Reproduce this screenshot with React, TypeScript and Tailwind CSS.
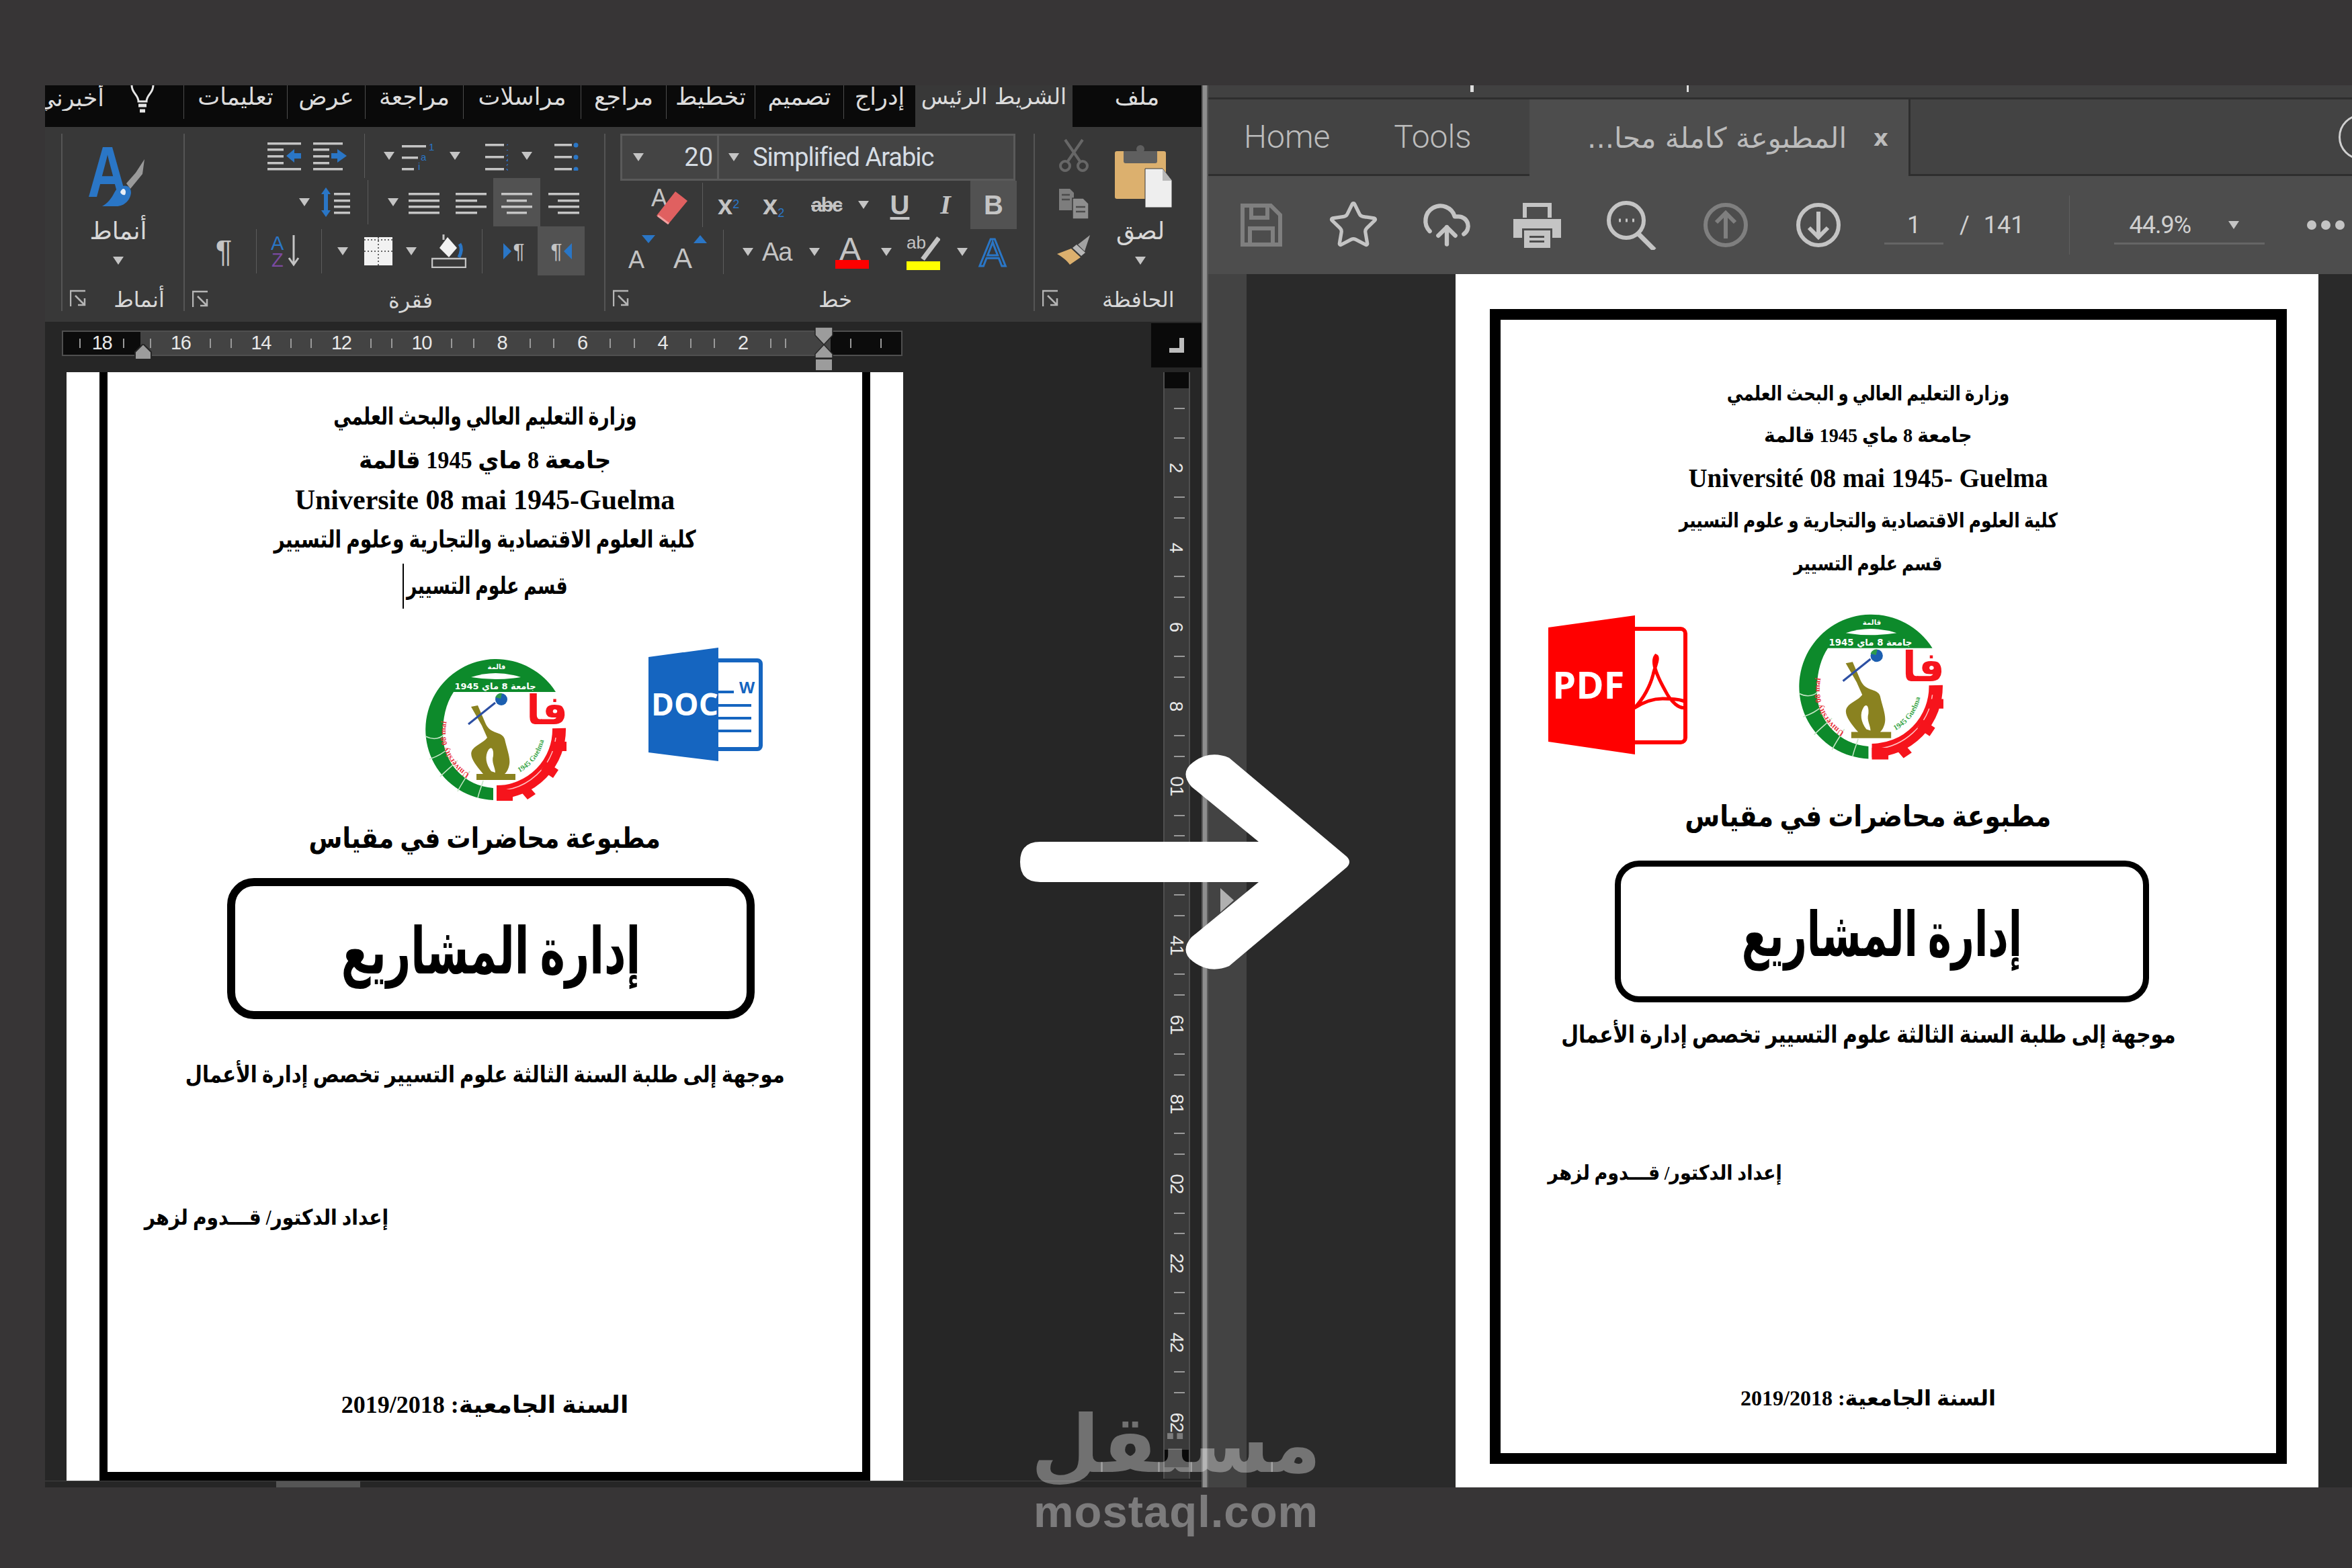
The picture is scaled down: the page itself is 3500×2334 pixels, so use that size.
import { CloudUpload, Star } from "lucide-react";

const ar = "font-['DejaVu_Sans',sans-serif]";
const doc = "font-['Liberation_Serif','DejaVu_Sans',serif]";
const g = "#c4c4c4";
const b = "#2a76c6";

const wordTabs = [
  { label: "تعليمات", cls: "w-[154px]" },
  { label: "عرض", cls: "w-[116px]" },
  { label: "مراجعة", cls: "w-[146px]" },
  { label: "مراسلات", cls: "w-[175px]" },
  { label: "مراجع", cls: "w-[127px]" },
  { label: "تخطيط", cls: "w-[132px]" },
  { label: "تصميم", cls: "w-[132px]" },
  { label: "إدراج", cls: "w-[107px]" },
];

const hRuler = ["16", "14", "12", "10", "8", "6", "4", "2"];
const vRuler = ["2", "4", "6", "8", "01", "21", "41", "61", "81", "02", "22", "42", "62"];

function Caret({ className = "" }: { className?: string }) {
  return (
    <svg width="16" height="12" viewBox="0 0 16 12" className={`shrink-0 ${className}`}>
      <path d="M0 0h16L8 12z" fill={g} />
    </svg>
  );
}

function Sep({ className = "" }: { className?: string }) {
  return <div className={`h-[66px] w-px shrink-0 bg-[#5c5c5c] ${className}`} />;
}

function Launcher() {
  return (
    <svg width="25" height="26" viewBox="0 0 25 26" fill="none" stroke="#b5b5b5" strokeWidth="2.5" className="shrink-0">
      <path d="M1 25V2h22" />
      <path d="M8 9l14 14M22 13v10H12" />
    </svg>
  );
}

function Lines({ rows, w = 50, h = 44, className = "", children }: { rows: number[][]; w?: number; h?: number; className?: string; children?: React.ReactNode }) {
  return (
    <svg width={w} height={h} viewBox={`0 0 ${w} ${h}`} className={`shrink-0 ${className}`}>
      {rows.map((r, i) => (
        <rect key={i} x={r[0]} y={r[1]} width={r[2]} height={3.5} fill={g} />
      ))}
      {children}
    </svg>
  );
}

function StylesIcon() {
  return (
    <svg width="92" height="94" viewBox="0 0 92 94" className="shrink-0">
      <text x="0" y="78" fill={b} fontSize="108" fontWeight="700" fontFamily="Liberation Sans" textLength="60" lengthAdjust="spacingAndGlyphs">
        A
      </text>
      <path d="M85 22L72 42l-14 16 6 8 18-22z" fill="#9a9a9a" />
      <path d="M52 62c8-2 13 2 13 10-1 10-9 20-22 20H22c8-4 14-12 18-20 3-6 7-9 12-10z" fill={b} />
      <path d="M54 66c3 1 4 5 2 9-3 1-6-1-7-4 1-3 3-5 5-5z" fill="#e8eef6" />
    </svg>
  );
}

function PasteIcon() {
  return (
    <svg width="88" height="94" viewBox="0 0 88 94" className="shrink-0">
      <path d="M4 10h70a3 3 0 013 3v68H4a3 3 0 01-3-3V13a3 3 0 013-3z" fill="#dcb06e" />
      <path d="M14 10h50v15a3 3 0 01-3 3H17a3 3 0 01-3-3z" fill="#5f5f5f" />
      <circle cx="39" cy="7" r="6" fill="#5f5f5f" />
      <path d="M46 36h26l14 18v40H46z" fill="#eeeeee" stroke="#383838" strokeWidth="1" />
      <path d="M72 36v18h14z" fill="#b8b8b8" />
    </svg>
  );
}

function ScissorsIcon() {
  return (
    <svg width="46" height="50" viewBox="0 0 46 50" fill="none" stroke="#676767" strokeWidth="4" className="shrink-0">
      <path d="M10 2l22 32M36 2L14 34" />
      <ellipse cx="10" cy="41" rx="7" ry="7" />
      <ellipse cx="36" cy="41" rx="7" ry="7" />
    </svg>
  );
}

function CopyIcon() {
  return (
    <svg width="46" height="46" viewBox="0 0 46 46" className="shrink-0">
      <path d="M1 1h16l6 6v26H1z" fill="#7d7d7d" />
      <path d="M21 15h16l8 8v23H21z" fill="#8e8e8e" stroke="#383838" strokeWidth="1.5" />
      <path d="M5 10h12M5 17h12M26 28h14M26 35h14" stroke="#4c4c4c" strokeWidth="2.5" />
    </svg>
  );
}

function PainterIcon() {
  return (
    <svg width="52" height="46" viewBox="0 0 52 46" className="shrink-0">
      <path d="M50 2l-18 14 10 10z" fill="#a2a2a2" />
      <path d="M30 16l13 12-6 5-13-12z" fill="#b8b8b8" />
      <path d="M22 22l14 13-16 11C16 40 8 34 1 30z" fill="#dcb06e" />
    </svg>
  );
}

function LogoMark({ className = "" }: { className?: string }) {
  return (
    <svg viewBox="11 10 215 212" className={className}>
      <defs>
        <path id="uni-left" d="M80 182A72 72 0 0 1 68 66" />
        <path id="uni-right" d="M154 180A72 72 0 0 0 192 116" />
      </defs>
      <path d="M115 221A105 105 0 1 1 208 60H56C44 78 40 100 40 122A80 80 0 0 0 115 203z" fill="#0d8a2b" />
      <path d="M82 38Q118 26 156 38Q118 44 82 38z" fill="#fff" />
      <path d="M14 126C26 132 38 130 44 120M20 160C32 156 40 152 48 144M36 186C46 176 54 170 62 162M62 208C68 196 74 188 80 178M92 218C94 208 98 200 100 192" fill="none" stroke="#c6e6c6" strokeWidth="1.5" />
      <text x="118" y="56" fontSize="13" fontWeight="700" fill="#fff" textAnchor="middle" className={ar}>
        جامعة 8 ماي 1945
      </text>
      <text x="120" y="26" fontSize="10" fontWeight="700" fill="#fff" textAnchor="middle" className={ar}>
        قالمة
      </text>
      <text fontSize="12" fontWeight="700" fill="#e8343b" fontFamily="Liberation Serif">
        <textPath href="#uni-left">University 08 mai</textPath>
      </text>
      <text fontSize="11" fontWeight="700" fill="#3aa64a" fontFamily="Liberation Serif">
        <textPath href="#uni-right">1945 Guelma</textPath>
      </text>
      <path d="M120 209A93 93 0 0 0 213 114" fill="none" stroke="#f6141c" strokeWidth="20" />
      <path d="M122 207A90 90 0 0 0 208 128" fill="none" stroke="#ffc4c4" strokeWidth="1.5" />
      <path d="M120 205h24v17h-24zM164 196l14 16-12 8-12-14zM194 164l18 12-8 12-18-12zM202 134h22v14h-22z" fill="#f6141c" />
      <text x="226" y="108" fontSize="60" fontWeight="700" fill="#f6141c" textAnchor="end" className={ar}>
        فا
      </text>
      <path d="M82 82L92 80L104 108C112 124 128 118 132 130C136 148 142 160 138 172C136 178 134 180 132 182H148V191H90V182H100C88 168 78 155 84 146C90 138 100 136 106 128L98 110z" fill="#8a8220" />
      <path d="M108 146C112 140 116 145 115 155C112 165 118 172 118 180L112 178C104 168 102 155 108 146z" fill="#fff" />
      <path d="M78 108L118 76" stroke="#2c4fa3" strokeWidth="3" />
      <circle cx="127" cy="71" r="9" fill="#1c5fb0" />
      <path d="M118 68a9 9 0 0 1 10-6l-2 8z" fill="#2d9a4c" />
    </svg>
  );
}

function DocIcon() {
  return (
    <svg width="170" height="169" viewBox="0 0 170 169" className="shrink-0">
      <path d="M104 19h58a5 5 0 015 5v122a5 5 0 01-5 5h-58" fill="none" stroke="#1565c0" strokeWidth="6" />
      <path d="M0 14L104 0v169L0 156z" fill="#1565c0" />
      <path d="M104 66h23M104 86h49M104 105h49M104 124h49" stroke="#1565c0" strokeWidth="4" />
      <text x="135" y="68" fontSize="24" fontWeight="700" fill="#1565c0" fontFamily="Open Sans">
        W
      </text>
      <text x="4" y="101" fontSize="46" fontWeight="700" fill="#fff" fontFamily="Open Sans">
        DOC
      </text>
    </svg>
  );
}

function PdfIcon() {
  return (
    <svg width="207" height="207" viewBox="0 0 207 207" className="shrink-0">
      <path d="M129 20h68a7 7 0 017 7v155a7 7 0 01-7 7h-68" fill="none" stroke="#ff0000" strokeWidth="6" />
      <path d="M0 18L129 0v207L0 188z" fill="#ff0000" />
      <path d="M160 60c-8 10 4 34 14 52 8 16 22 30 32 24 6-8-10-12-36-12-14 0-30 6-42 14 14-14 24-34 28-50 2-10 10-26 4-28z" fill="none" stroke="#ff0000" strokeWidth="5" />
      <text x="6" y="124" fontSize="56" fontWeight="700" fill="#fff" fontFamily="Open Sans">
        PDF
      </text>
    </svg>
  );
}

function GroupFoot({ className, label }: { className: string; label: string }) {
  return (
    <div className="flex items-start pl-[11px] pt-[22px]">
      <Launcher />
      <span className={`${ar} ${className} mt-[-2px] w-[100px] text-center text-[32px] leading-[34px]`}>{label}</span>
    </div>
  );
}

function RibbonGroups() {
  return (
    <div className="flex h-[290px] bg-[#383838] text-[#d8d8d8]">
      <div className="w-[24px]" />

      {/* styles */}
      <div className="mt-[10px] flex h-[264px] w-[182px] flex-col border-l-2 border-[#555]">
        <div className="flex h-[217px] flex-col items-center pr-[14px] pt-[16px]">
          <StylesIcon />
          <span className={`${ar} mt-[13px] text-[36px] leading-[44px]`}>أنماط</span>
          <Caret className="mt-[16px]" />
        </div>
        <GroupFoot className="ml-[28px]" label="أنماط" />
      </div>

      {/* paragraph */}
      <div className="mt-[10px] flex h-[264px] w-[626px] flex-col border-l-2 border-[#555]">
        <div className="flex h-[72px] items-center pl-[123px]">
          <Lines rows={[[0, 2, 50], [0, 11, 24], [0, 21, 24], [0, 31, 24], [0, 40, 50]]}>
            <path d="M28 22l12-10v6h10v8H40v6z" fill={b} />
          </Lines>
          <Lines className="ml-[18px]" rows={[[0, 2, 44], [0, 11, 24], [0, 21, 24], [0, 31, 24], [0, 40, 44]]}>
            <path d="M50 22L36 12v6H27v8h9v6z" fill={b} />
          </Lines>
          <Sep className="ml-[26px]" />
          <Caret className="ml-[28px]" />
          <Lines className="ml-[11px]" rows={[[0, 6, 36], [0, 23, 24], [0, 40, 18]]}>
            <text x="40" y="14" fontSize="15" fill={b} fontFamily="Liberation Sans">1</text>
            <text x="28" y="29" fontSize="15" fill={b} fontFamily="Liberation Sans">a</text>
            <text x="24" y="43" fontSize="15" fill={b} fontFamily="Liberation Sans">i</text>
          </Lines>
          <Caret className="ml-[21px]" />
          <Lines className="ml-[21px]" rows={[[16, 4, 28], [16, 22, 28], [16, 40, 28]]}>
            <text x="47" y="14" fontSize="15" fill={b} fontFamily="Liberation Sans">1</text>
            <text x="47" y="30" fontSize="15" fill={b} fontFamily="Liberation Sans">2</text>
            <text x="47" y="44" fontSize="15" fill={b} fontFamily="Liberation Sans">3</text>
          </Lines>
          <Caret className="ml-[20px]" />
          <Lines className="ml-[19px]" rows={[[14, 4, 26], [14, 22, 26], [14, 40, 26]]}>
            <circle cx="46" cy="6" r="3.5" fill={b} />
            <circle cx="46" cy="24" r="3.5" fill={b} />
            <circle cx="46" cy="42" r="3.5" fill={b} />
          </Lines>
        </div>
        <div className="flex h-[72px] items-center pl-[170px]">
          <Caret />
          <Lines className="ml-[12px]" rows={[[24, 8, 24], [24, 18, 24], [24, 27, 24], [24, 36, 24]]}>
            <path d="M12 0l7 10h-4v24h4l-7 10-7-10h4V10H5z" fill={b} />
          </Lines>
          <Sep className="ml-[24px]" />
          <Caret className="ml-[29px]" />
          <div className="ml-[3px] flex h-[72px] w-[70px] items-center justify-center">
            <Lines w={46} rows={[[0, 8, 46], [0, 18, 46], [0, 27, 46], [0, 36, 46]]} />
          </div>
          <div className="flex h-[72px] w-[70px] items-center justify-center">
            <Lines w={46} rows={[[0, 8, 46], [0, 18, 32], [0, 27, 46], [0, 36, 32]]} />
          </div>
          <div className="ml-[-2px] flex h-[72px] w-[70px] items-center justify-center bg-[#525252]">
            <Lines w={46} rows={[[0, 8, 46], [8, 18, 30], [0, 27, 46], [8, 36, 30]]} />
          </div>
          <div className="flex h-[72px] w-[70px] items-center justify-center">
            <Lines w={46} rows={[[0, 8, 46], [14, 18, 32], [0, 27, 46], [14, 36, 32]]} />
          </div>
        </div>
        <div className="flex h-[73px] items-center pl-[38px]">
          <span className="w-[40px] text-center font-['Liberation_Sans',sans-serif] text-[46px] leading-none text-[#c4c4c4]">¶</span>
          <Sep className="ml-[28px]" />
          <svg width="50" height="52" viewBox="0 0 50 52" className="ml-[21px] shrink-0">
            <text x="0" y="24" fontSize="29" fill={b} fontFamily="Liberation Sans">A</text>
            <text x="1" y="49" fontSize="29" fill="#7a4aa0" fontFamily="Liberation Sans">Z</text>
            <path d="M34 2v42M27 36l7 10 7-10" stroke={g} strokeWidth="3" fill="none" />
          </svg>
          <Sep className="ml-[25px]" />
          <Caret className="ml-[23px]" />
          <svg width="50" height="42" viewBox="0 0 50 42" className="ml-[20px] shrink-0">
            <rect x="4" y="0" width="42" height="42" fill="#f2f2f2" />
            <path d="M4 4h42M4 21h42M25 0v42" stroke="#666" strokeWidth="2" strokeDasharray="2 3" fill="none" />
          </svg>
          <Caret className="ml-[16px]" />
          <svg width="52" height="50" viewBox="0 0 52 50" className="ml-[22px] shrink-0">
            <path d="M24 4l14 16-12 14-14-14z" fill="#f2f2f2" />
            <path d="M18 0v8" stroke={g} strokeWidth="3" />
            <path d="M42 14c4 6 3 12-1 20" stroke={b} strokeWidth="5" fill="none" />
            <rect x="1" y="36" width="50" height="13" fill="none" stroke={g} strokeWidth="2.5" />
          </svg>
          <Sep className="ml-[23px]" />
          <div className="ml-[12px] flex h-[73px] w-[70px] items-center justify-center gap-[2px]">
            <svg width="12" height="24" viewBox="0 0 12 24"><path d="M0 0l12 12L0 24z" fill={b} /></svg>
            <span className="font-['Liberation_Sans',sans-serif] text-[32px] leading-none text-[#c4c4c4]">¶</span>
          </div>
          <div className="flex h-[73px] w-[70px] items-center justify-center gap-[2px] bg-[#525252]">
            <span className="font-['Liberation_Sans',sans-serif] text-[32px] leading-none text-[#c4c4c4]">¶</span>
            <svg width="12" height="24" viewBox="0 0 12 24"><path d="M12 0L0 12l12 12z" fill={b} /></svg>
          </div>
        </div>
        <GroupFoot className="ml-[250px]" label="فقرة" />
      </div>

      {/* font */}
      <div className="mt-[10px] flex h-[264px] w-[639px] flex-col border-l-2 border-[#555]">
        <div className="ml-[22px] flex h-[73px] w-[588px] items-center border-[3px] border-[#5a5a5a] bg-[#444]">
          <div className="flex h-full w-[144px] items-center border-r-[3px] border-[#5a5a5a] pl-[16px] pr-[6px]">
            <Caret />
            <span className="ml-auto font-['Roboto',sans-serif] text-[38px] leading-none text-[#d6dde4]">20</span>
          </div>
          <Caret className="ml-[14px]" />
          <span className="ml-[20px] font-['Roboto',sans-serif] text-[38px] leading-none tracking-[-1px] text-[#d6dde4]">Simplified Arabic</span>
        </div>
        <div className="flex h-[72px] items-center pl-[68px]">
          <svg width="56" height="60" viewBox="0 0 56 60" className="shrink-0">
            <text x="0" y="32" fontSize="36" fill={g} fontFamily="Liberation Sans">A</text>
            <path d="M36 10l18 14-28 34-18-12z" fill="#e06060" />
            <path d="M10 46l16 12" stroke="#f3a0a0" strokeWidth="3" />
          </svg>
          <Sep className="ml-[20px]" />
          <span className="ml-[22px] w-[50px] font-['Liberation_Sans',sans-serif] text-[40px] font-bold leading-none text-[#c4c4c4]">
            x<sup className="text-[18px] font-normal text-[#2a76c6]">2</sup>
          </span>
          <span className="ml-[17px] w-[50px] font-['Liberation_Sans',sans-serif] text-[40px] font-bold leading-none text-[#c4c4c4]">
            x<sub className="text-[18px] font-normal text-[#2a76c6]">2</sub>
          </span>
          <span className="ml-[22px] w-[50px] font-['Liberation_Sans',sans-serif] text-[30px] font-bold leading-none tracking-[-2px] text-[#c4c4c4] line-through">abc</span>
          <Caret className="ml-[20px]" />
          <span className="ml-[21px] w-[50px] text-center font-['Liberation_Sans',sans-serif] text-[40px] font-bold leading-none text-[#c4c4c4] underline underline-offset-4">U</span>
          <span className="ml-[18px] w-[50px] text-center font-['Liberation_Serif',serif] text-[40px] font-bold italic leading-none text-[#c4c4c4]">I</span>
          <span className="ml-[12px] flex h-[72px] w-[69px] items-center justify-center bg-[#525252] font-['Liberation_Sans',sans-serif] text-[40px] font-bold text-[#c4c4c4]">B</span>
        </div>
        <div className="flex h-[72px] items-center pl-[32px]">
          <svg width="50" height="50" viewBox="0 0 50 50" className="shrink-0">
            <text x="2" y="49" fontSize="36" fill={g} fontFamily="Liberation Sans">A</text>
            <path d="M22 0h20l-10 12z" fill={b} />
          </svg>
          <svg width="50" height="50" viewBox="0 0 50 50" className="ml-[19px] shrink-0">
            <text x="0" y="49" fontSize="42" fill={g} fontFamily="Liberation Sans">A</text>
            <path d="M30 12h20L40 0z" fill={b} />
          </svg>
          <Sep className="ml-[24px]" />
          <Caret className="ml-[28px]" />
          <span className="ml-[13px] w-[50px] font-['Liberation_Sans',sans-serif] text-[38px] leading-none tracking-[-1px] text-[#c4c4c4]">Aa</span>
          <Caret className="ml-[20px]" />
          <svg width="50" height="50" viewBox="0 0 50 50" className="ml-[23px] shrink-0">
            <text x="6" y="37" fontSize="48" fill={g} fontFamily="Liberation Sans">A</text>
            <rect x="0" y="37" width="50" height="13" fill="#ff0000" />
          </svg>
          <Caret className="ml-[18px]" />
          <svg width="50" height="54" viewBox="0 0 50 54" className="ml-[22px] shrink-0">
            <text x="0" y="22" fontSize="26" fill={g} fontFamily="Liberation Sans">ab</text>
            <path d="M48 6L24 38" stroke={g} strokeWidth="7" />
            <rect x="0" y="41" width="50" height="13" fill="#ffff00" />
          </svg>
          <Caret className="ml-[25px]" />
          <svg width="50" height="50" viewBox="0 0 50 50" className="ml-[12px] shrink-0">
            <text x="25" y="46" textAnchor="middle" fontSize="58" fill="none" stroke={b} strokeWidth="3" fontFamily="Liberation Sans">A</text>
          </svg>
        </div>
        <GroupFoot className="ml-[256px]" label="خط" />
      </div>

      {/* clipboard */}
      <div className="mt-[10px] flex h-[264px] w-[250px] flex-col border-l-2 border-[#555]">
        <div className="flex h-[217px] pl-[32px]">
          <div className="flex w-[52px] flex-col items-center pt-[7px]">
            <ScissorsIcon />
            <div className="h-[24px]" />
            <CopyIcon />
            <div className="h-[22px]" />
            <PainterIcon />
          </div>
          <div className="ml-[32px] flex w-[92px] flex-col items-center pt-[16px]">
            <PasteIcon />
            <span className={`${ar} mr-[10px] mt-[13px] text-[36px] leading-[44px]`}>لصق</span>
            <Caret className="mr-[10px] mt-[16px]" />
          </div>
        </div>
        <GroupFoot className="ml-[64px]" label="الحافظة" />
      </div>
    </div>
  );
}

function Tick() {
  return <span className="h-[14px] w-[2px] bg-[#999]" />;
}

function WordPane() {
  return (
    <div className="flex w-[1721px] shrink-0 flex-col">
      {/* tabs */}
      <div className={`${ar} flex h-[62px] bg-[#0a0a0a] text-[35px] text-[#dcdcdc]`}>
        <div className="flex w-[206px] items-start overflow-hidden">
          <div className="flex w-[88px] shrink-0 justify-end overflow-hidden">
            <span className="shrink-0 whitespace-nowrap leading-[38px]">أخبرني</span>
          </div>
          <svg width="36" height="44" viewBox="0 0 36 44" fill="none" stroke="#e6e6e6" strokeWidth="3" className="ml-[39px] mt-[-2px] shrink-0">
            <path d="M2 2c0 12 10 14 10 24h12c0-10 10-12 10-24" />
            <path d="M12 32h12M14 40h8" strokeWidth="5" />
          </svg>
        </div>
        {wordTabs.map((t) => (
          <div key={t.label} className={`${t.cls} flex h-[50px] items-start justify-center border-l border-[#4d4d4d] leading-[34px]`}>
            {t.label}
          </div>
        ))}
        <div className="flex h-[62px] w-[234px] items-start justify-center whitespace-nowrap bg-[#383838] text-[33px] leading-[34px]">الشريط الرئيس</div>
        <div className="flex w-[192px] items-start justify-center leading-[34px]">ملف</div>
      </div>

      <RibbonGroups />

      {/* document area */}
      <div className="relative flex h-[1735px] bg-[#262626]">
        <div className="flex w-[1646px] flex-col">
          {/* ruler */}
          <div className="ml-[25px] mt-[13px] flex h-[38px] w-[1251px] items-center border-2 border-[#4f4f4f] bg-[#434343] font-['Liberation_Sans',sans-serif] text-[29px] tracking-[-1.5px] text-[#e8e8e8]">
            <div className="flex h-full w-[115px] items-center justify-around bg-[#0c0c0c] px-[16px]">
              <Tick />
              <span>18</span>
              <Tick />
            </div>
            <div className="flex">
              {hRuler.map((n) => (
                <div key={n} className="flex h-[34px] w-[119.5px] items-center justify-around">
                  <Tick />
                  <span>{n}</span>
                  <Tick />
                </div>
              ))}
            </div>
            <div className="ml-[3px] flex h-[12px] w-[30px] items-center">
              <Tick />
            </div>
            <div className="ml-[38px] flex h-full flex-1 items-center justify-around bg-[#0c0c0c] px-[8px]">
              <Tick />
              <Tick />
            </div>
          </div>

          {/* page */}
          <div className="ml-[32px] mt-[24px] flex h-[1650px] w-[1245px] bg-white px-[49px]">
            <div className="flex w-full flex-col border-x-[12px] border-b-[13px] border-black text-black">
              <Line cls="mt-[36px] text-[36px]" fit="scale-x-[0.74]">وزارة التعليم العالي والبحث العلمي</Line>
              <Line cls="mt-[5px] text-[36px]" fit="scale-x-[0.95]">جامعة 8 ماي 1945 قالمة</Line>
              <p className="mt-[-1px] h-[60px] text-center font-['Liberation_Serif',serif] text-[42px] font-bold leading-[60px]">Universite 08 mai 1945-Guelma</p>
              <Line cls="mt-[-1px] text-[36px]" fit="scale-x-[0.78]">كلية العلوم الاقتصادية والتجارية وعلوم التسيير</Line>
              <div className="ml-[439px] mt-[9px] flex h-[60px] items-center">
                <span className="h-[67px] w-[2px] shrink-0 bg-black" />
                <div className="ml-[6px] flex w-[236px] justify-center">
                  <span dir="rtl" className={`${doc} shrink-0 scale-x-[0.74] whitespace-nowrap text-[36px] font-bold leading-[60px]`}>قسم علوم التسيير</span>
                </div>
              </div>
              <div className="mt-[62px] flex h-[229px] items-start">
                <LogoMark className="ml-[470px] mt-[16px] h-[212px] w-[215px] shrink-0" />
                <div className="ml-[120px]">
                  <DocIcon />
                </div>
              </div>
              <Line cls="mt-[25px] text-[42px]" fit="scale-x-[0.86]">مطبوعة محاضرات في مقياس</Line>
              <div className="ml-[178px] mt-[29px] flex h-[210px] w-[785px] items-center justify-center rounded-[40px] border-[12px] border-black pt-[10px]">
                <span dir="rtl" className={`${doc} shrink-0 scale-x-[0.66] whitespace-nowrap text-[96px] font-bold leading-none`}>إدارة المشاريع</span>
              </div>
              <Line cls="mt-[53px] text-[34px]" fit="scale-x-[0.853]">موجهة إلى طلبة السنة الثالثة علوم التسيير تخصص إدارة الأعمال</Line>
              <div className="ml-[55px] mt-[152px] flex h-[60px] w-[362px] justify-center">
                <span dir="rtl" className={`${doc} shrink-0 scale-x-[0.88] whitespace-nowrap text-[32px] font-bold leading-[60px]`}>إعداد الدكتور/ قـــدوم لزهر</span>
              </div>
              <Line cls="mt-[219px] text-[36px]" fit="scale-x-[1]">السنة الجامعية: 2019/2018</Line>
            </div>
          </div>
        </div>

        {/* vertical ruler */}
        <div className="flex w-[75px] flex-col items-center">
          <div className="mt-[2px] flex h-[66px] w-[75px] items-center justify-center bg-[#0a0a0a]">
            <div className="h-[22px] w-[22px] border-b-[7px] border-r-[7px] border-[#bdbdbd]" />
          </div>
          <div className="mt-[7px] flex h-[1647px] w-[40px] flex-col border-x-2 border-[#4f4f4f] bg-[#3a3a3a] font-['Liberation_Sans',sans-serif] text-[28px] tracking-[-1px] text-[#e8e8e8]">
            <div className="h-[24px] shrink-0 bg-[#0a0a0a]" />
            <div className="flex h-[59px] shrink-0 items-center justify-center">
              <span className="ml-[8px] h-[2px] w-[16px] bg-[#999]" />
            </div>
            <div className="flex h-[1521px] shrink-0 flex-col overflow-hidden">
              {vRuler.map((n) => (
                <div key={n} className="flex h-[118.4px] shrink-0 flex-col items-center justify-around">
                  <span className="ml-[8px] h-[2px] w-[16px] bg-[#999]" />
                  <span className="rotate-90 leading-none">{n}</span>
                  <span className="ml-[8px] h-[2px] w-[16px] bg-[#999]" />
                </div>
              ))}
            </div>
            <div className="h-[26px] shrink-0 bg-[#0a0a0a]" />
          </div>
        </div>

        {/* indent markers sit on the ruler */}
        <svg width="28" height="24" viewBox="0 0 28 24" className="absolute left-[132px] top-[33px]">
          <path d="M14 0l12 12v11H2V12z" fill="#9c9c9c" stroke="#262626" strokeWidth="2" />
        </svg>
        <svg width="30" height="66" viewBox="0 0 30 66" className="absolute left-[1144px] top-[8px]">
          <path d="M2 0h26v12L15 26 2 12zM15 26l13 14v6H2v-6z" fill="#9c9c9c" stroke="#262626" strokeWidth="1.5" />
          <rect x="3" y="48" width="24" height="16" fill="#9c9c9c" />
        </svg>

        {/* horizontal scrollbar */}
        <div className="absolute bottom-0 left-0 flex h-[10px] w-[1721px] border-t border-[#444] bg-[#262626]">
          <div className="ml-[344px] h-[9px] w-[125px] bg-[#555]" />
        </div>
      </div>
    </div>
  );
}

function Line({ cls, fit, children }: { cls: string; fit: string; children: React.ReactNode }) {
  return (
    <div className={`${cls} flex h-[60px] justify-center`}>
      <span dir="rtl" className={`${doc} ${fit} shrink-0 whitespace-nowrap font-bold leading-[60px]`}>
        {children}
      </span>
    </div>
  );
}

function PdfToolbar() {
  const c = "#c4c4c4";
  return (
    <div className="flex h-[146px] items-center bg-[#4d4d4d] pl-[48px] font-['Roboto',sans-serif] text-[36px] text-[#d0d0d0]">
      <svg width="62" height="64" viewBox="0 0 62 64" fill="none" stroke="#7f7f7f" strokeWidth="6" className="shrink-0">
        <path d="M3 3h42l14 14v44H3z" />
        <path d="M16 3v18h24V3M14 61V37h34v24" />
      </svg>
      <Star size={78} color={c} strokeWidth={1.6} className="ml-[67px] shrink-0" />
      <CloudUpload size={76} color={c} strokeWidth={2} className="ml-[62px] shrink-0" />
      <svg width="71" height="67" viewBox="0 0 71 67" className="ml-[61px] shrink-0" fill={c}>
        <path d="M14 0h43v22h-6V6H20v16h-6z" />
        <path d="M0 24h71v28H58V38H13v14H0z" />
        <path d="M16 41h39v26H16zM24 49v3h22v-3zM24 56v3h22v-3z" fillRule="evenodd" />
      </svg>
      <svg width="76" height="74" viewBox="0 0 76 74" fill="none" stroke={c} strokeWidth="6" className="ml-[67px] shrink-0">
        <circle cx="30" cy="30" r="26" />
        <path d="M48 50l24 24" strokeWidth="7" />
        <path d="M19 30h3M29 30h3M39 30h3" strokeWidth="5" />
      </svg>
      <svg width="68" height="68" viewBox="0 0 68 68" fill="none" stroke="#7f7f7f" strokeWidth="6" className="ml-[68px] shrink-0">
        <circle cx="34" cy="34" r="30" />
        <path d="M34 54V16M20 30l14-14 14 14" />
      </svg>
      <svg width="68" height="68" viewBox="0 0 68 68" fill="none" stroke={c} strokeWidth="6" className="ml-[70px] shrink-0">
        <circle cx="34" cy="34" r="30" />
        <path d="M34 14v38M20 38l14 14 14-14" />
      </svg>
      <div className="relative ml-[64px] w-[88px] text-center leading-none">
        1
        <div className="absolute left-0 top-[44px] h-[3px] w-[88px] bg-[#666]" />
      </div>
      <span className="ml-[24px] leading-none">/</span>
      <span className="ml-[21px] leading-none">141</span>
      <div className="ml-[66px] h-[88px] w-px bg-[#5f5f5f]" />
      <div className="relative ml-[66px] flex w-[224px] items-center pl-[23px] leading-none">
        <span className="tracking-[-1px]">44.9%</span>
        <Caret className="ml-[56px]" />
        <div className="absolute left-0 top-[44px] h-[3px] w-[224px] bg-[#666]" />
      </div>
      <div className="ml-[63px] flex gap-[7px]">
        <span className="h-[14px] w-[14px] rounded-full bg-[#c4c4c4]" />
        <span className="h-[14px] w-[14px] rounded-full bg-[#c4c4c4]" />
        <span className="h-[14px] w-[14px] rounded-full bg-[#c4c4c4]" />
      </div>
    </div>
  );
}

function PdfPane() {
  return (
    <div className="flex min-w-0 flex-1 flex-col">
      <div className="flex h-[18px] bg-[#414141]">
        <span className="ml-[390px] h-[10px] w-[5px] bg-[#ddd]" />
        <span className="ml-[317px] h-[10px] w-[3px] bg-[#ddd]" />
      </div>
      <div className="h-[3px] bg-[#2e2e2e]" />
      <div className="flex h-[114px] text-[#bcbcbc]">
        <div className="flex w-[478px] items-center gap-[95px] border-b-[3px] border-[#2e2e2e] bg-[#434343] pl-[53px] font-['Roboto',sans-serif] text-[48px] font-light">
          <span>Home</span>
          <span>Tools</span>
        </div>
        <div dir="rtl" className={`${ar} flex w-[564px] items-center bg-[#4d4d4d] pr-[30px] text-[42px]`}>
          <span className="text-[34px] font-bold">x</span>
          <span className="mr-[40px] whitespace-nowrap">المطبوعة كاملة محا...</span>
        </div>
        <div className="flex flex-1 items-center justify-end overflow-hidden border-b-[3px] border-l-[3px] border-[#2e2e2e] bg-[#434343]">
          <div className="mr-[-48px] h-[68px] w-[68px] rounded-full border-[3px] border-[#cfcfcf]" />
        </div>
      </div>
      <PdfToolbar />
      <div className="flex flex-1">
        <div className="w-[57px] bg-[#434343]" />
        <div className="w-[311px] bg-[#2a2a2a]" />
        <div className="h-[1806px] w-[1284px] bg-white px-[51px] pt-[52px]">
          <div className="flex h-[1719px] w-[1186px] flex-col border-[16px] border-black pr-[60px] text-black">
            <Line cls="mt-[80px] text-[30px]" fit="scale-x-[0.815]">وزارة التعليم العالي و البحث العلمي</Line>
            <Line cls="mt-[2px] text-[30px]" fit="scale-x-[0.94]">جامعة 8 ماي 1945 قالمة</Line>
            <p className="mt-[4px] h-[60px] text-center font-['Liberation_Serif',serif] text-[39px] font-bold leading-[60px]">Université 08 mai 1945- Guelma</p>
            <Line cls="mt-[3px] text-[30px]" fit="scale-x-[0.83]">كلية العلوم الاقتصادية والتجارية و علوم التسيير</Line>
            <Line cls="mt-[4px] text-[30px]" fit="scale-x-[0.82]">قسم علوم التسيير</Line>
            <div className="mt-[43px] flex h-[220px] items-start">
              <div className="ml-[71px] mt-[4px]">
                <PdfIcon />
              </div>
              <LogoMark className="ml-[163px] h-[220px] w-[220px] shrink-0" />
            </div>
            <Line cls="mt-[54px] text-[44px]" fit="scale-x-[0.855]">مطبوعة محاضرات في مقياس</Line>
            <div className="ml-[170px] mt-[35px] flex h-[211px] w-[795px] items-center justify-center rounded-[36px] border-[9px] border-black pt-[10px]">
              <span dir="rtl" className={`${doc} shrink-0 scale-x-[0.645] whitespace-nowrap text-[92px] font-bold leading-none`}>إدارة المشاريع</span>
            </div>
            <Line cls="mt-[18px] text-[36px]" fit="scale-x-[0.826]">موجهة إلى طلبة السنة الثالثة علوم التسيير تخصص إدارة الأعمال</Line>
            <div className="ml-[70px] mt-[146px] flex h-[60px] w-[349px] justify-center">
              <span dir="rtl" className={`${doc} shrink-0 scale-x-[0.9] whitespace-nowrap text-[30px] font-bold leading-[60px]`}>إعداد الدكتور/ قـــدوم لزهر</span>
            </div>
            <Line cls="mt-[275px] text-[32px]" fit="scale-x-[1]">السنة الجامعية: 2019/2018</Line>
          </div>
        </div>
        <div className="flex-1 bg-[#2a2a2a]" />
      </div>
    </div>
  );
}

export default function App() {
  return (
    <div className="relative h-[2334px] w-[3500px] overflow-hidden bg-[#373536]">
      <div className="flex h-[2214px] pl-[67px] pt-[127px]">
        <WordPane />
        <div className="w-[10px] shrink-0 border-x-2 border-[#5c5c5c] bg-[#8e8e8e]" />
        <PdfPane />
      </div>

      {/* splitter arrow on the scrollbar strip */}
      <svg width="24" height="36" viewBox="0 0 24 36" className="absolute left-[1816px] top-[1322px]">
        <path d="M0 0l20 18L0 36z" fill="#b0b0b0" />
      </svg>

      {/* big arrow between the two windows */}
      <svg width="530" height="370" viewBox="1500 1100 530 370" className="absolute left-[1500px] top-[1100px]">
        <path
          d="M1548 1253H1873L1773 1171Q1755 1150 1775 1135Q1800 1116 1829 1128L2004 1275Q2012 1283 2004 1291L1829 1438Q1800 1450 1775 1431Q1755 1416 1773 1395L1873 1313H1548Q1518 1313 1518 1283Q1518 1253 1548 1253z"
          fill="#fff"
        />
      </svg>

      {/* site watermark */}
      <div className="absolute left-[1540px] top-[2080px] flex w-[420px] flex-col items-center text-white/35">
        <span dir="rtl" className={`${ar} text-[118px] font-bold leading-[140px]`}>مستقل</span>
        <span className="font-['Liberation_Sans',sans-serif] text-[67px] font-bold leading-[60px] tracking-[1px]">mostaql.com</span>
      </div>
    </div>
  );
}
